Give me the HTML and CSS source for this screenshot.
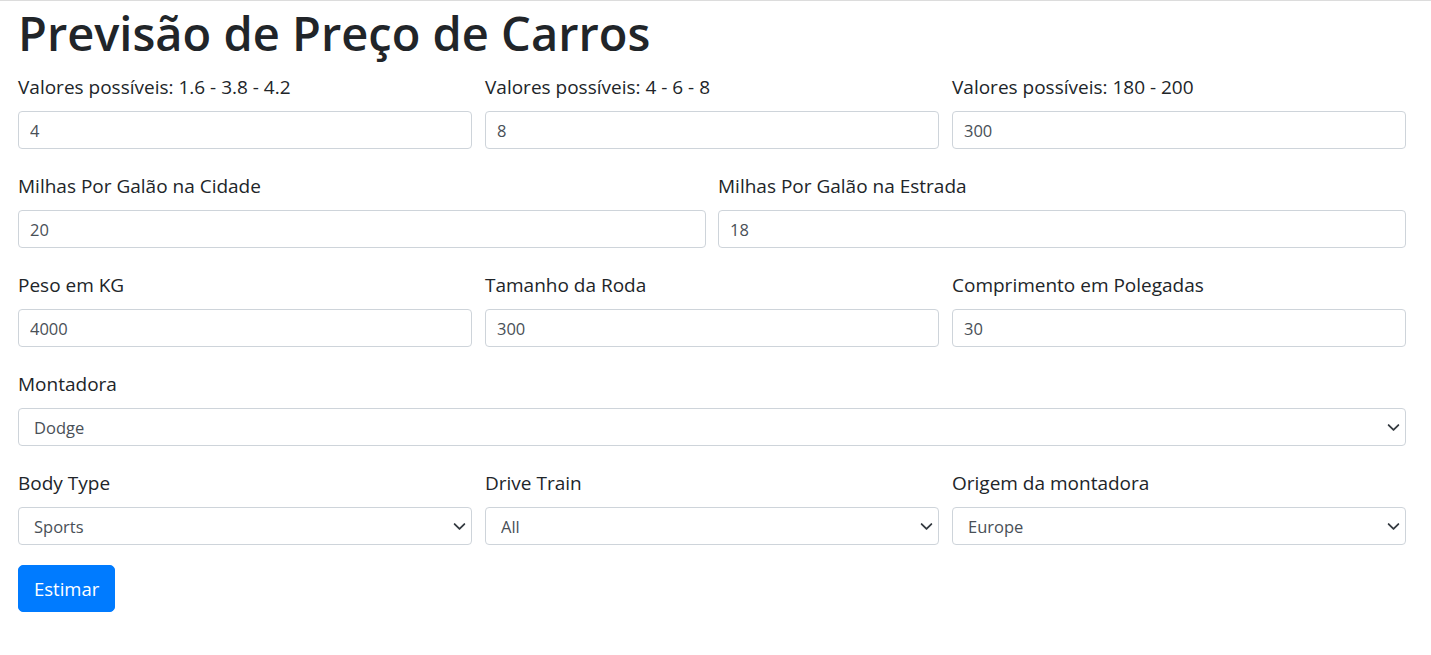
FILE: index.html
```html
<!DOCTYPE html>
<html lang="pt-BR">
<head>
<meta charset="utf-8">
<title>Previsão de Preço de Carros</title>
<link rel="stylesheet" href="styles.css">
</head>
<body>
<div class="page">
  <h1 class="title">Previsão de Preço de Carros</h1>
  <form class="form">
    <div class="row row-3">
      <div class="group">
        <label class="label">Valores possíveis: 1.6 - 3.8 - 4.2</label>
        <input class="control" type="text" value="4">
      </div>
      <div class="group">
        <label class="label">Valores possíveis: 4 - 6 - 8</label>
        <input class="control" type="text" value="8">
      </div>
      <div class="group">
        <label class="label">Valores possíveis: 180 - 200</label>
        <input class="control" type="text" value="300">
      </div>
    </div>
    <div class="row row-2">
      <div class="group">
        <label class="label">Milhas Por Galão na Cidade</label>
        <input class="control" type="text" value="20">
      </div>
      <div class="group">
        <label class="label">Milhas Por Galão na Estrada</label>
        <input class="control" type="text" value="18">
      </div>
    </div>
    <div class="row row-3">
      <div class="group">
        <label class="label">Peso em KG</label>
        <input class="control" type="text" value="4000">
      </div>
      <div class="group">
        <label class="label">Tamanho da Roda</label>
        <input class="control" type="text" value="300">
      </div>
      <div class="group">
        <label class="label">Comprimento em Polegadas</label>
        <input class="control" type="text" value="30">
      </div>
    </div>
    <div class="row row-1">
      <div class="group">
        <label class="label">Montadora</label>
        <div class="select-wrap">
          <select class="control select"><option>Dodge</option></select>
          <svg class="chevron" viewBox="0 0 16 16" width="13" height="13"><path fill="none" stroke="#343a40" stroke-linecap="round" stroke-linejoin="round" stroke-width="2.2" d="M2 5l6 6 6-6"/></svg>
        </div>
      </div>
    </div>
    <div class="row row-3">
      <div class="group">
        <label class="label">Body Type</label>
        <div class="select-wrap">
          <select class="control select"><option>Sports</option></select>
          <svg class="chevron" viewBox="0 0 16 16" width="13" height="13"><path fill="none" stroke="#343a40" stroke-linecap="round" stroke-linejoin="round" stroke-width="2.2" d="M2 5l6 6 6-6"/></svg>
        </div>
      </div>
      <div class="group">
        <label class="label">Drive Train</label>
        <div class="select-wrap">
          <select class="control select"><option>All</option></select>
          <svg class="chevron" viewBox="0 0 16 16" width="13" height="13"><path fill="none" stroke="#343a40" stroke-linecap="round" stroke-linejoin="round" stroke-width="2.2" d="M2 5l6 6 6-6"/></svg>
        </div>
      </div>
      <div class="group">
        <label class="label">Origem da montadora</label>
        <div class="select-wrap">
          <select class="control select"><option>Europe</option></select>
          <svg class="chevron" viewBox="0 0 16 16" width="13" height="13"><path fill="none" stroke="#343a40" stroke-linecap="round" stroke-linejoin="round" stroke-width="2.2" d="M2 5l6 6 6-6"/></svg>
        </div>
      </div>
    </div>
    <button class="btn" type="button">Estimar</button>
  </form>
</div>
</body>
</html>
```

FILE: styles.css
```css
* { box-sizing: border-box; }
html, body { margin: 0; padding: 0; background: #fff; }
body {
  border-top: 1px solid #dcdcdc;
  font-family: "Open Sans", "Noto Sans", sans-serif;
  color: #212529;
}
.page {
  padding: 0 25px 0 18px;
}
.title {
  margin: 2px 0 12px 0;
  font-size: 47px;
  line-height: 60px;
  font-weight: 600;
  letter-spacing: 0;
}
.form { display: block; }
.row {
  display: grid;
  column-gap: 13px;
  margin-bottom: 25px;
}
.row-3 { grid-template-columns: repeat(3, 1fr); }
.row-2 { grid-template-columns: repeat(2, 1fr); column-gap: 12px; }
.row-1 { grid-template-columns: 1fr; }
.group { display: flex; flex-direction: column; }
.label {
  display: block;
  font-size: 19px;
  line-height: 24px;
  margin-bottom: 12px;
  color: #212529;
}
.control {
  display: block;
  width: 100%;
  height: 38px;
  padding: 0 11px;
  font-family: inherit;
  font-size: 16.5px;
  color: #495057;
  background: #fff;
  border: 1px solid #ced4da;
  border-radius: 4px;
  outline: none;
}
.select-wrap { position: relative; }
.select {
  appearance: none;
  -webkit-appearance: none;
  padding-left: 15px;
  padding-right: 30px;
}
.chevron {
  position: absolute;
  right: 6px;
  top: 13px;
  pointer-events: none;
}
.btn {
  display: inline-block;
  margin-top: -5px;
  height: 47px;
  padding: 0 15px;
  font-family: inherit;
  font-size: 18.5px;
  color: #fff;
  background: #007bff;
  border: 1px solid #007bff;
  border-radius: 5px;
}
```
